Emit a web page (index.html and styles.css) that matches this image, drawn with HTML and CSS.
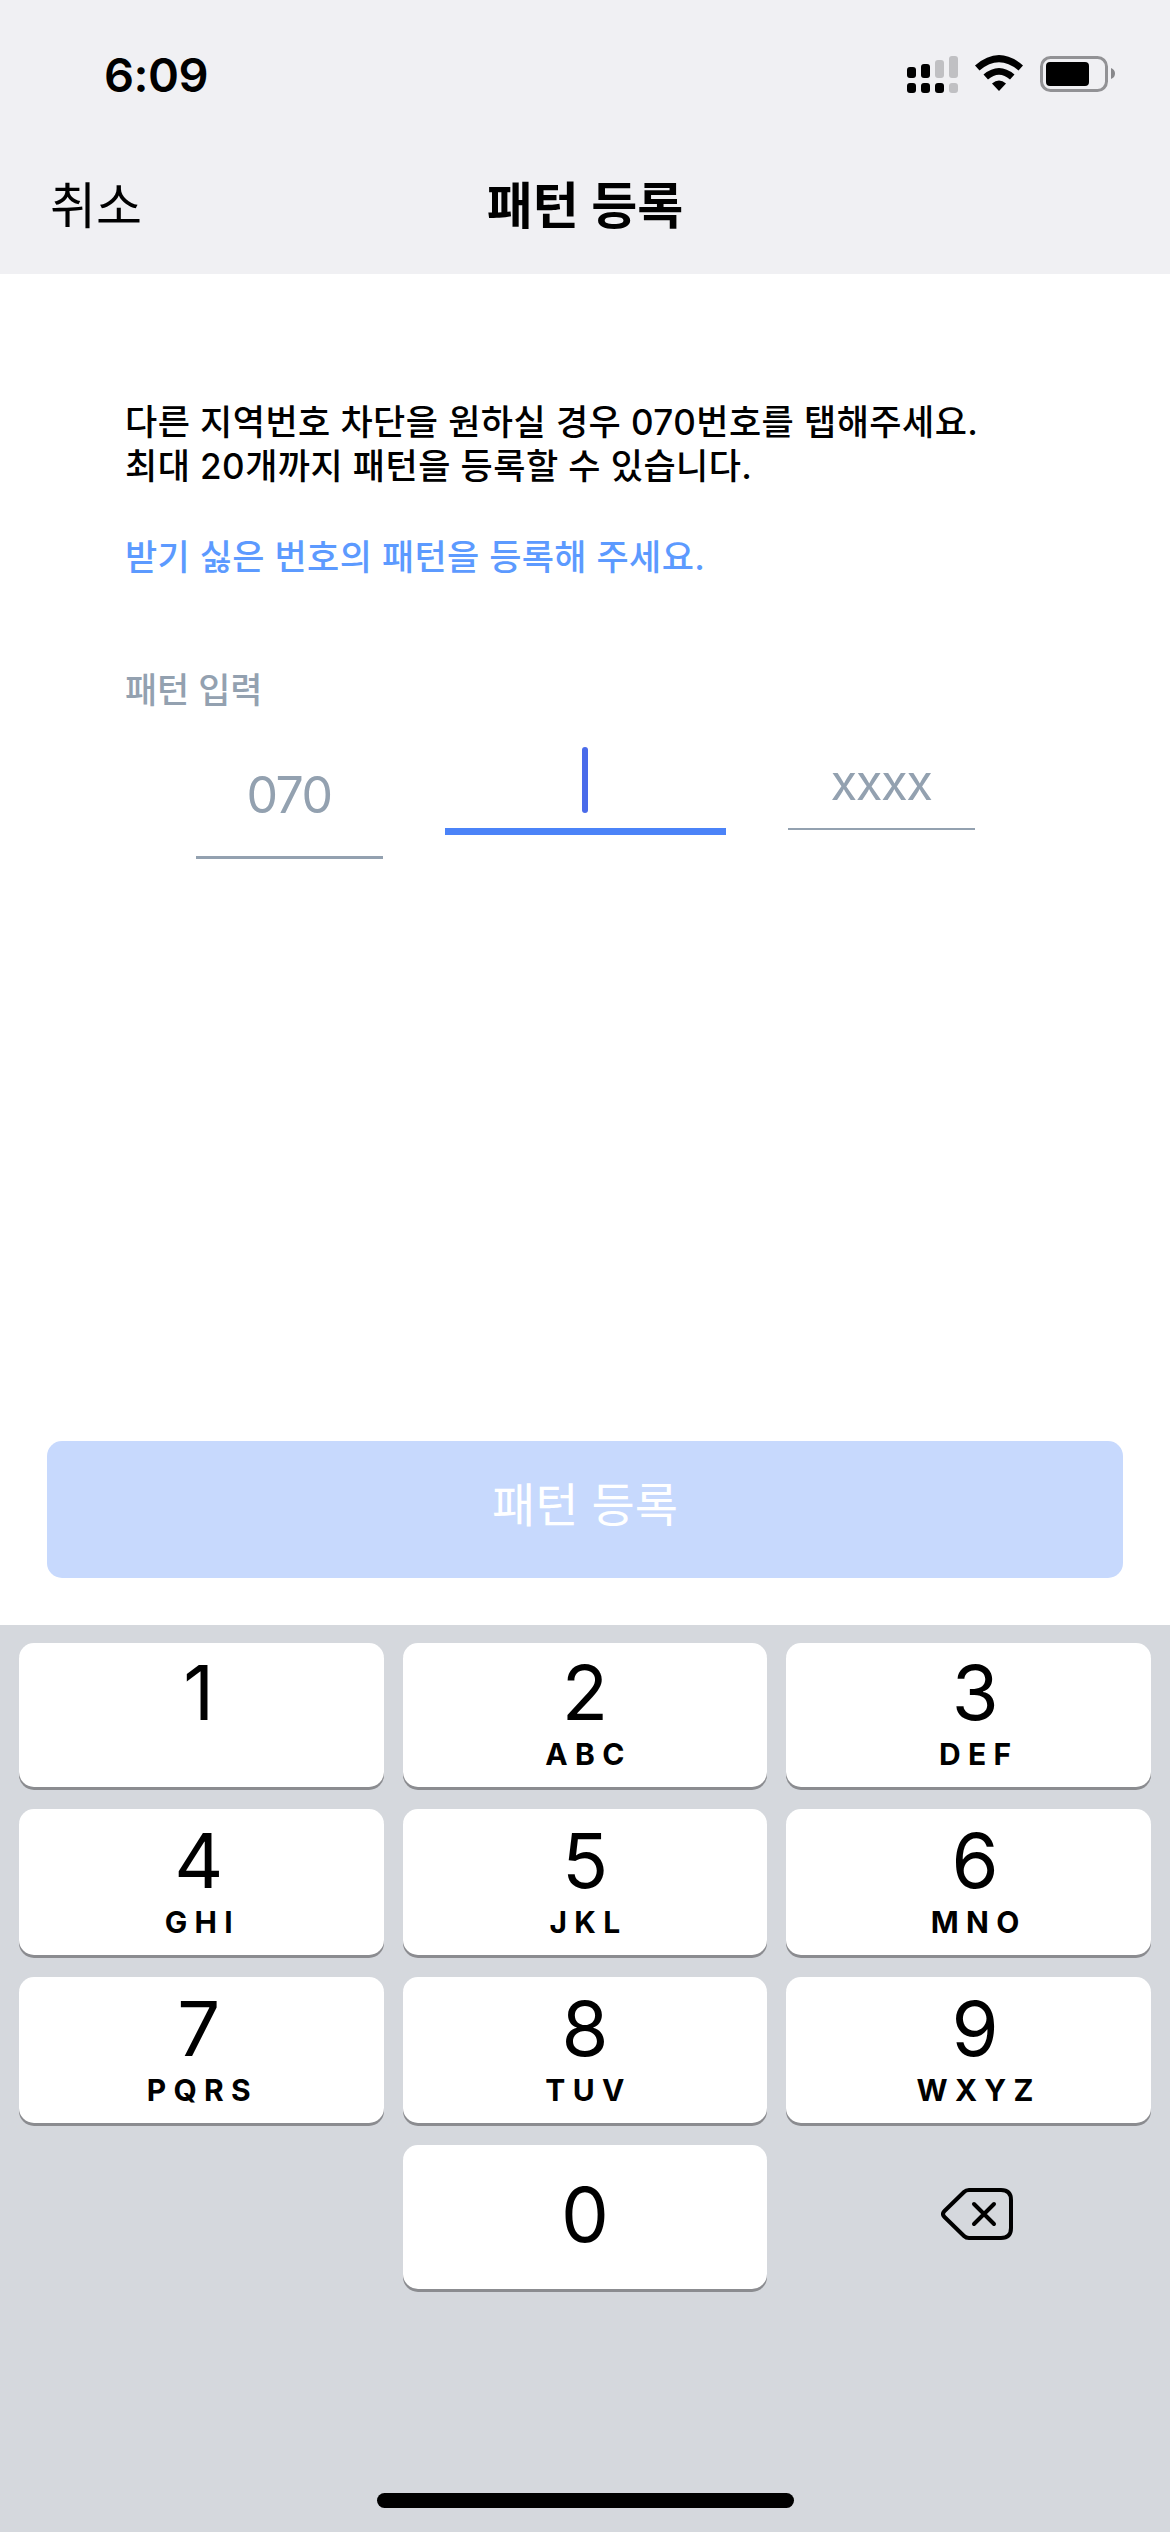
FILE: index.html
```html
<!DOCTYPE html>
<html lang="ko">
<head>
    <meta charset="UTF-8">
    <meta name="viewport" content="width=device-width, initial-scale=1.0">
    <title>패턴 등록</title>
    <link rel="stylesheet" href="styles.css">
</head>
<body>
    <header>
        <div class="status-bar">
            <span class="time">6:09</span>
            <svg class="status-icons" width="210" height="40" viewBox="0 0 210 40">
                <!-- signal -->
                <rect x="2" y="12" width="9" height="11" rx="3"/>
                <rect x="16" y="9" width="9" height="14" rx="3"/>
                <g fill="#c0c0c3">
                    <rect x="30" y="5" width="9" height="18" rx="3"/>
                    <rect x="44" y="1" width="9" height="22" rx="3"/>
                    <rect x="44" y="28" width="9" height="10" rx="3"/>
                </g>
                <rect x="2" y="28" width="9" height="10" rx="3"/>
                <rect x="16" y="28" width="9" height="10" rx="3"/>
                <rect x="30" y="28" width="9" height="10" rx="3"/>
                <!-- wifi -->
                <path d="M70 10.500Q94 -10.500 118 10.500L113.500 15.500Q94 -1 74.500 15.500Z"/>
                <path d="M78.500 19.500Q94 6.500 109.500 19.500L105 24.500Q94 15 83 24.500Z"/>
                <path d="M87 28.500Q94 22.500 101 28.500L94 36Z"/>
                <!-- battery -->
                <rect x="136.500" y="2.500" width="65" height="33" rx="9" fill="none" stroke="#929295" stroke-width="3"/>
                <rect x="141" y="7" width="43" height="24" rx="4"/>
                <path d="M206 13Q210 14.500 210 18.500Q210 22.500 206 24Z" fill="#88888b"/>
            </svg>
        </div>
        <nav>
            <span class="cancel">취소</span>
            <h1>패턴 등록</h1>
        </nav>
    </header>

    <main>
        <p class="info">다른 지역번호 차단을 원하실 경우 070번호를 탭해주세요.<br>최대 20개까지 패턴을 등록할 수 있습니다.</p>
        <p class="guide">받기 싫은 번호의 패턴을 등록해 주세요.</p>
        <p class="label">패턴 입력</p>

        <div class="pattern">
            <div class="field first">070</div>
            <div class="field active"><span class="caret"></span></div>
            <div class="field last">xxxx</div>
        </div>

        <button class="submit" disabled>패턴 등록</button>
    </main>

    <section class="keyboard">
        <div class="keys">
            <div class="key left"><b>1</b><small></small></div>
            <div class="key"><b>2</b><small>ABC</small></div>
            <div class="key right"><b>3</b><small>DEF</small></div>
            <div class="key left"><b>4</b><small>GHI</small></div>
            <div class="key"><b>5</b><small>JKL</small></div>
            <div class="key right"><b>6</b><small>MNO</small></div>
            <div class="key left"><b>7</b><small>PQRS</small></div>
            <div class="key"><b>8</b><small>TUV</small></div>
            <div class="key right"><b>9</b><small>WXYZ</small></div>
            <div class="key zero"><b>0</b></div>
            <div class="delete">
                <svg width="72" height="52" viewBox="0 0 72 52" fill="none" stroke="#000" stroke-width="4" stroke-linecap="round" stroke-linejoin="round">
                    <path d="M28 2H60Q70 2 70 12V40Q70 50 60 50H28Q25 50 23 48L3.500 29Q0.500 26 3.500 23L23 4Q25 2 28 2Z"/>
                    <path d="M33 16L53 36M53 16L33 36"/>
                </svg>
            </div>
        </div>
        <div class="home-bar"></div>
    </section>
</body>
</html>
```

FILE: styles.css
```css
* {
    margin: 0;
    padding: 0;
    box-sizing: border-box;
}
body {
    width: 1170px;
    height: 2532px;
    display: flex;
    flex-direction: column;
    overflow: hidden;
    background-color: #fff;
    color: #000;
    font-family: Inter, "Noto Sans CJK KR", sans-serif;
}
header {
    height: 274px;
    background-color: #f0f0f3;
}
.status-bar {
    display: flex;
    justify-content: space-between;
    padding: 55px 55px 0 104px;
    height: 147px;
}
.time {
    font-size: 47px;
    font-weight: 600;
    line-height: 39px;
    letter-spacing: -0.5px;
}
nav {
    display: grid;
    grid-template-columns: 1fr auto 1fr;
    align-items: center;
    padding: 0 50px;
    height: 110px;
}
.cancel {
    font-size: 50px;
}
h1 {
    font-size: 50px;
    font-weight: 600;
}
main {
    height: 1351px;
    padding: 126px 47px 0;
}
p {
    padding-left: 78px;
    font-size: 35px;
    font-weight: 500;
    line-height: 44px;
    white-space: nowrap;
}
.info {
    letter-spacing: 0.45px;
}
.guide {
    margin-top: 47px;
    color: #5c9aff;
    letter-spacing: 0.35px;
}
.label {
    margin-top: 89px;
    color: #93a1b0;
    letter-spacing: -0.2px;
}
/* pattern inputs */
.pattern {
    display: flex;
    justify-content: center;
    align-items: flex-start;
    gap: 62px;
    margin-top: 33px;
    height: 117px;
}
.field {
    display: flex;
    justify-content: center;
    align-items: center;
    width: 187px;
    color: #93a1b0;
    font-size: 49px;
    letter-spacing: -1.5px;
}
.first {
    height: 114px;
    padding-bottom: 11px;
    border-bottom: 3px solid #93a1b0;
    font-size: 50px;
}
.active {
    width: 281px;
    height: 90px;
    padding-bottom: 15px;
    align-items: flex-end;
    border-bottom: 7px solid #4b83f8;
}
.caret {
    width: 6px;
    height: 66px;
    border-radius: 3px;
    background-color: #4a6bea;
}
.last {
    height: 85px;
    padding-bottom: 8px;
    border-bottom: 2px solid #93a1b0;
}
.submit {
    display: block;
    width: 1076px;
    height: 137px;
    margin-top: 579px;
    padding-bottom: 16px;
    border: none;
    border-radius: 15px;
    background-color: #c7d9fd;
    color: #fff;
    font-family: inherit;
    font-size: 47px;
}
/* number pad */
.keyboard {
    flex: 1;
    display: flex;
    flex-direction: column;
    justify-content: space-between;
    align-items: center;
    padding: 18px 19px 24px;
    background-color: #d5d8dd;
}
.keys {
    display: grid;
    width: 100%;
    grid-template-columns: repeat(3, 1fr);
    grid-template-rows: 144px 146.5px 146.5px 144px;
    gap: 21.5px 19px;
}
.key {
    display: flex;
    flex-direction: column;
    justify-content: flex-end;
    align-items: center;
    padding-bottom: 15px;
    border-radius: 15px;
    background-color: #fff;
    box-shadow: 0 3px 0 #8b8c90;
}
.key b {
    margin-bottom: 6px;
    font-size: 76px;
    font-weight: 400;
    line-height: 76px;
}
.key small {
    height: 36px;
    margin-right: -7px;
    font-size: 30px;
    font-weight: 700;
    line-height: 36px;
    letter-spacing: 7.3px;
}
.left {
    padding-right: 5px;
}
.right {
    padding-left: 13px;
}
.key.zero {
    grid-column: 2;
    justify-content: center;
    padding-bottom: 0;
}
.delete {
    display: flex;
    justify-content: center;
    align-items: center;
    padding: 0 0 5px 16px;
}
.home-bar {
    width: 417px;
    height: 15px;
    border-radius: 8px;
    background-color: #000;
}
```
